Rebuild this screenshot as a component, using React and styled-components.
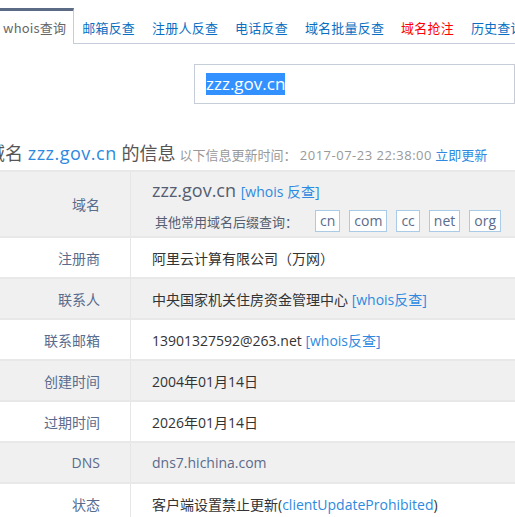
import React from "react"
import styled, { createGlobalStyle } from "styled-components"

const GlobalStyle = createGlobalStyle`
  html, body {
    margin: 0;
    padding: 0;
    background: #fff;
    overflow: hidden;
  }
  body {
    font-family: "Open Sans", "Noto Sans CJK SC", sans-serif;
    color: #333;
  }
`

const Page = styled.div`
  width: 515px;
  height: 517px;
  overflow: hidden;
`

const TabBar = styled.ul`
  display: flex;
  margin: 8px 0 0 -6px;
  padding: 0;
  list-style: none;
  border-bottom: 1px solid #c5cdd8;
  white-space: nowrap;
  height: 35px;
`

const Tab = styled.li`
  display: flex;
  align-items: center;
  padding: ${(p) => (p.$active ? "0 7px 0 9px" : "0 8px")};
  font-size: 13px;
  letter-spacing: 0.2px;
  font-family: "Noto Sans CJK SC", sans-serif;
  color: ${(p) => (p.$active ? "#666" : p.$hot ? "#f00" : "#0a6fc2")};
  background: #fff;
  border-top: 3px solid ${(p) => (p.$active ? "#5b6b85" : "transparent")};
  border-right: 1px solid ${(p) => (p.$active ? "#c5cdd8" : "transparent")};
  margin-bottom: ${(p) => (p.$active ? "-1px" : "0")};
  height: ${(p) => (p.$active ? "33px" : "32px")};
`

const SearchRow = styled.div`
  display: flex;
  padding: 20px 0 0 194px;
`

const SearchBox = styled.div`
  width: 400px;
  height: 40px;
  border: 1px solid #c5cdd8;
  display: flex;
  align-items: center;
  padding-left: 11px;
  box-sizing: border-box;
`

const Selected = styled.span`
  background: #3390ff;
  color: #fff;
  font-size: 17px;
  line-height: 22px;
`

const Title = styled.h2`
  margin: 36px 0 0 -13px;
  font-size: 18px;
  font-weight: normal;
  color: #555;
  white-space: nowrap;
  line-height: 26px;
  height: 26px;
`

const Domain = styled.span`
  color: #2d8ae0;
  letter-spacing: 0.5px;
`

const Updated = styled.span`
  font-size: 13px;
  color: #999;
  margin-left: 4px;
`

const Stamp = styled.span`
  letter-spacing: 0.5px;
`

const Blue = styled.a`
  color: #2d8ae0;
  text-decoration: none;
  font-size: ${(p) => p.$size || "inherit"};
`

const Table = styled.table`
  width: 100%;
  border-collapse: collapse;
  margin-top: 4px;
  border-top: 2px solid #e8e8e8;
  font-size: 14px;
`

const Row = styled.tr`
  background: ${(p) => (p.$grey ? "#f0f0f0" : "#fff")};
  border-bottom: 2px solid #e8e8e8;
`

const Label = styled.td`
  width: 100px;
  padding: 0 30px 0 0;
  text-align: right;
  color: #5a6b8c;
  border-right: 1px solid #e6e6e6;
  height: ${(p) => (p.$tall ? "64px" : "39px")};
  white-space: nowrap;
`

const Value = styled.td`
  padding: 0 0 0 21px;
  color: ${(p) => (p.$muted ? "#5a6b8c" : "#333")};
  white-space: nowrap;
`

const BigDomain = styled.div`
  font-size: 18px;
  color: #555e70;
  line-height: 24px;
  margin-top: 2px;
`

const Suffixes = styled.div`
  display: flex;
  align-items: center;
  gap: 9px;
  margin-top: 6px;
  padding-left: 3px;
  font-size: 13px;
  color: #555e70;
`

const Hint = styled.span`
  margin-right: 8px;
`

const Suffix = styled.span`
  border: 1px solid #a9cbe8;
  background: #fff;
  padding: 0 4px;
  line-height: 20px;
  font-size: 14px;
  color: #5a6b8c;
`

const tabs = ["whois查询", "邮箱反查", "注册人反查", "电话反查", "域名批量反查", "域名抢注", "历史查询"]

const rows = [
  { label: "注册商", value: "阿里云计算有限公司（万网）" },
  { label: "联系人", value: "中央国家机关住房资金管理中心", link: "[whois反查]" },
  { label: "联系邮箱", value: "13901327592@263.net", link: "[whois反查]" },
  { label: "创建时间", value: "2004年01月14日" },
  { label: "过期时间", value: "2026年01月14日" },
  { label: "DNS", value: "dns7.hichina.com", muted: true },
]

const App = () => (
  <Page>
    <GlobalStyle />
    <TabBar>
      {tabs.map((t, i) => (
        <Tab key={t} $active={i === 0} $hot={t === "域名抢注"}>
          {t}
        </Tab>
      ))}
    </TabBar>
    <SearchRow>
      <SearchBox>
        <Selected>zzz.gov.cn</Selected>
      </SearchBox>
    </SearchRow>
    <Title>
      域名 <Domain>zzz.gov.cn</Domain> 的信息
      <Updated>
        以下信息更新时间： <Stamp>2017-07-23 22:38:00</Stamp> <Blue href="#">立即更新</Blue>
      </Updated>
    </Title>
    <Table>
      <tbody>
        <Row $grey>
          <Label $tall>域名</Label>
          <Value>
            <BigDomain>
              zzz.gov.cn <Blue href="#" $size="14px">[whois 反查]</Blue>
            </BigDomain>
            <Suffixes>
              <Hint>其他常用域名后缀查询：</Hint>
              {["cn", "com", "cc", "net", "org"].map((s) => (
                <Suffix key={s}>{s}</Suffix>
              ))}
            </Suffixes>
          </Value>
        </Row>
        {rows.map((r, i) => (
          <Row key={r.label} $grey={i % 2 === 1}>
            <Label>{r.label}</Label>
            <Value $muted={r.muted}>
              {r.value}
              {r.link && (
                <>
                  {" "}
                  <Blue href="#">{r.link}</Blue>
                </>
              )}
            </Value>
          </Row>
        ))}
        <Row>
          <Label>状态</Label>
          <Value>
            客户端设置禁止更新(<Blue href="#">clientUpdateProhibited</Blue>)
          </Value>
        </Row>
      </tbody>
    </Table>
  </Page>
)

export default App
